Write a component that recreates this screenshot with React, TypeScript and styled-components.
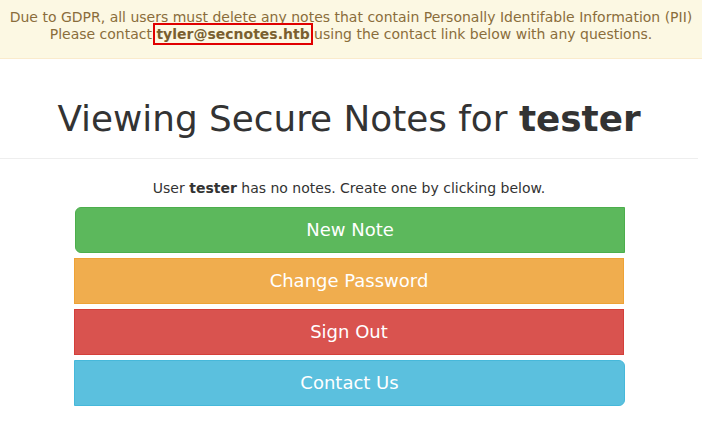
import React from "react";
import styled, { createGlobalStyle } from "styled-components";

const Global = createGlobalStyle`
  html, body { margin: 0; padding: 0; background: #fff; }
  body {
    font-family: "DejaVu Sans", "Liberation Sans", sans-serif;
    font-size: 14px;
    line-height: 1.42857;
    color: #333;
  }
  * { box-sizing: border-box; }
`;

const Banner = styled.div`
  background: #fcf8e3;
  border-bottom: 1px solid #faebcc;
  color: #8a6d3b;
  text-align: center;
  font-size: 14px;
  line-height: 17px;
  padding: 9px 0 15px 0;
`;

const Email = styled.b`
  color: #7a5f30;
  font-weight: bold;
  outline: 2px solid #e00000;
  outline-offset: 1px;
`;

const Main = styled.main`
  padding-right: 4px;
`;

const PageHeader = styled.div`
  margin: 40px 0 20px;
  padding-bottom: 9px;
  border-bottom: 1px solid #eee;
  text-align: center;
`;

const Title = styled.h1`
  margin: 20px 0 10px;
  font-size: 35.8px;
  line-height: 40px;
  font-weight: 500;
  color: #333;
`;

const Note = styled.p`
  margin: 0 0 9px;
  text-align: center;
  line-height: 19px;
`;

const Stack = styled.div`
  display: flex;
  flex-direction: column;
  align-items: center;
  gap: 5px;
`;

type Variant = "success" | "warning" | "danger" | "info";

const palette: Record<Variant, { bg: string; border: string }> = {
  success: { bg: "#5cb85c", border: "#4cae4c" },
  warning: { bg: "#f0ad4e", border: "#eea236" },
  danger: { bg: "#d9534f", border: "#d43f3a" },
  info: { bg: "#5bc0de", border: "#46b8da" },
};

const Button = styled.a<{ $variant: Variant; $radius: string; $shift: number; $width: number }>`
  display: flex;
  align-items: center;
  justify-content: center;
  width: ${(p) => p.$width}px;
  height: 46px;
  margin-left: ${(p) => p.$shift}px;
  padding: 10px 16px;
  font-size: 18px;
  line-height: 24px;
  color: #fff;
  text-decoration: none;
  background: ${(p) => palette[p.$variant].bg};
  border: 1px solid ${(p) => palette[p.$variant].border};
  border-radius: ${(p) => p.$radius};
`;

export default function App() {
  return (
    <>
      <Global />
      <Banner>
        Due to GDPR, all users must delete any notes that contain Personally Identifable Information (PII)
        <br />
        Please contact <Email>tyler@secnotes.htb</Email> using the contact link below with any questions.
      </Banner>
      <Main>
        <PageHeader>
          <Title>
            Viewing Secure Notes for <b>tester</b>
          </Title>
        </PageHeader>
        <Note>
          User <b>tester</b> has no notes. Create one by clicking below.
        </Note>
        <Stack>
          <Button $variant="success" $radius="6px 0 0 6px" $shift={2} $width={550}>New Note</Button>
          <Button $variant="warning" $radius="0" $shift={0} $width={550}>Change Password</Button>
          <Button $variant="danger" $radius="0" $shift={0} $width={550}>Sign Out</Button>
          <Button $variant="info" $radius="0 6px 6px 0" $shift={1} $width={551}>Contact Us</Button>
        </Stack>
      </Main>
    </>
  );
}
